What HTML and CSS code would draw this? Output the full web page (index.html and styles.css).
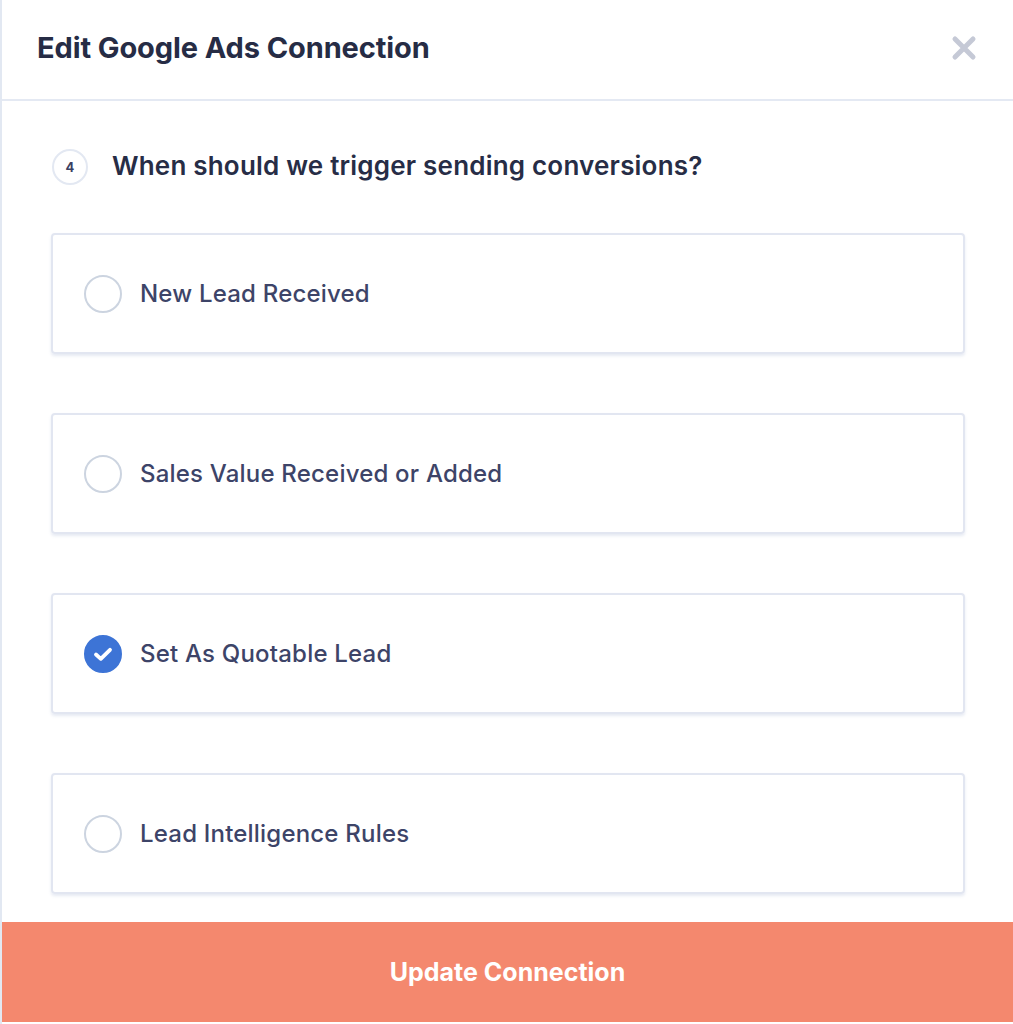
FILE: index.html
```html
<!DOCTYPE html>
<html>
<head>
<meta charset="utf-8">
<link rel="stylesheet" href="styles.css">
</head>
<body>
<div class="modal">
  <header class="modal-header">
    <h1 class="modal-title">Edit Google Ads Connection</h1>
    <button class="close" aria-label="Close">
      <svg width="26" height="26" viewBox="0 0 26 26"><path d="M4 4 L22 22 M22 4 L4 22" stroke="#c5c9d6" stroke-width="5" stroke-linecap="round"/></svg>
    </button>
  </header>
  <main class="modal-body">
    <div class="step">
      <span class="step-num">4</span>
      <h2 class="step-title">When should we trigger sending conversions?</h2>
    </div>
    <div class="options">
      <label class="option"><span class="radio"></span><span class="option-label">New Lead Received</span></label>
      <label class="option"><span class="radio"></span><span class="option-label">Sales Value Received or Added</span></label>
      <label class="option"><span class="radio checked"><svg width="22" height="22" viewBox="0 0 22 22"><path d="M4 11.5 L8.8 15.8 L18 6.8" fill="none" stroke="#fff" stroke-width="3.8" stroke-linecap="round" stroke-linejoin="round"/></svg></span><span class="option-label">Set As Quotable Lead</span></label>
      <label class="option"><span class="radio"></span><span class="option-label">Lead Intelligence Rules</span></label>
    </div>
  </main>
  <button class="submit">Update Connection</button>
</div>
</body>
</html>
```
FILE: styles.css
```css
* { box-sizing: border-box; }
html, body { margin: 0; padding: 0; background: #fff; }
body { font-family: Inter, "Noto Sans", sans-serif; }
.modal {
  width: 1013px;
  height: 1024px;
  border-left: 2px solid #e2e8f2;
  display: flex;
  flex-direction: column;
  background: #fff;
}
.modal-header {
  height: 101px;
  border-bottom: 2px solid #e4e9f3;
  display: flex;
  align-items: center;
  justify-content: space-between;
  padding: 0 36px 4px 35px;
}
.modal-title {
  margin: 0;
  font-size: 29px;
  font-weight: 700;
  color: #262c45;
  letter-spacing: -0.1px;
}
.close {
  background: none;
  border: 0;
  padding: 0;
  width: 26px;
  height: 26px;
  cursor: pointer;
  display: block;
}
.close svg { display: block; }
.modal-body {
  flex: 1;
  padding: 48px 48px 0 49px;
}
.step {
  display: flex;
  align-items: center;
  gap: 24px;
  margin-left: 1px;
}
.step-num {
  width: 36px;
  height: 36px;
  border-radius: 50%;
  border: 2px solid #e3e8f2;
  display: flex;
  align-items: center;
  justify-content: center;
  font-size: 13px;
  font-weight: 700;
  color: #3a4062;
}
.step-title {
  margin: 0;
  font-size: 26px;
  font-weight: 600;
  letter-spacing: 0.2px;
  color: #272d46;
  position: relative;
  top: -2px;
}
.options {
  margin-top: 48px;
  display: flex;
  flex-direction: column;
  gap: 59px;
}
.option {
  height: 121px;
  border: 2px solid #e2e6f1;
  border-radius: 4px;
  box-shadow: 0 2px 3px rgba(200, 208, 228, 0.45);
  display: flex;
  align-items: center;
  padding-left: 31px;
  gap: 18px;
  cursor: pointer;
}
.radio {
  width: 38px;
  height: 38px;
  border-radius: 50%;
  border: 2px solid #ccd4e0;
  display: flex;
  align-items: center;
  justify-content: center;
  flex-shrink: 0;
}
.radio.checked {
  background: #3d74d6;
  border-color: #3d74d6;
}
.radio svg { display: block; }
.option-label {
  font-size: 24px;
  font-weight: 500;
  letter-spacing: 0.2px;
  color: #3d4468;
}
.submit {
  height: 100px;
  margin-bottom: 2px;
  border: 0;
  background: #f4886e;
  color: #fff;
  font-family: inherit;
  font-size: 25px;
  font-weight: 700;
  cursor: pointer;
}
```
